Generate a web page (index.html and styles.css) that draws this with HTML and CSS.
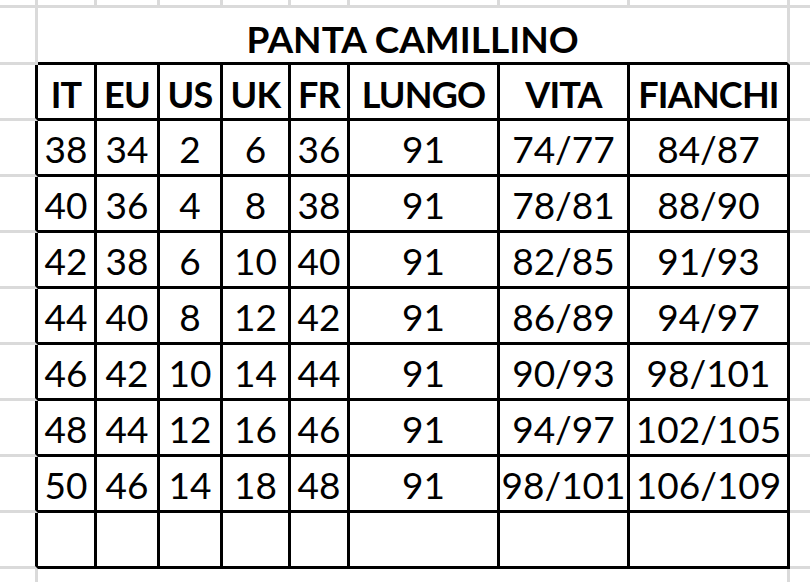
FILE: index.html
```html
<!DOCTYPE html>
<html lang="it">
<head>
<meta charset="utf-8">
<title>Panta Camillino</title>
<link rel="stylesheet" href="styles.css">
</head>
<body>
<div class="sheet">
  <!-- top spreadsheet row -->
  <div class="gc"></div><div class="gc"></div><div class="gc"></div><div class="gc"></div><div class="gc"></div>
  <div class="gc"></div><div class="gc"></div><div class="gc"></div><div class="gc"></div><div class="rm"></div>

  <!-- title -->
  <div class="gc"></div>
  <div class="title">PANTA CAMILLINO</div>
  <div class="rm"></div>

  <!-- header -->
  <div class="lm"></div>
  <div class="c h">IT</div><div class="c h">EU</div><div class="c h">US</div><div class="c h">UK</div><div class="c h">FR</div>
  <div class="c h">LUNGO</div><div class="c h">VITA</div><div class="c h">FIANCHI</div>
  <div class="rm"></div>

  <div class="lm"></div>
  <div class="c">38</div><div class="c">34</div><div class="c">2</div><div class="c">6</div><div class="c">36</div>
  <div class="c">91</div><div class="c">74/77</div><div class="c">84/87</div>
  <div class="rm"></div>

  <div class="lm"></div>
  <div class="c">40</div><div class="c">36</div><div class="c">4</div><div class="c">8</div><div class="c">38</div>
  <div class="c">91</div><div class="c">78/81</div><div class="c">88/90</div>
  <div class="rm"></div>

  <div class="lm"></div>
  <div class="c">42</div><div class="c">38</div><div class="c">6</div><div class="c">10</div><div class="c">40</div>
  <div class="c">91</div><div class="c">82/85</div><div class="c">91/93</div>
  <div class="rm"></div>

  <div class="lm"></div>
  <div class="c">44</div><div class="c">40</div><div class="c">8</div><div class="c">12</div><div class="c">42</div>
  <div class="c">91</div><div class="c">86/89</div><div class="c">94/97</div>
  <div class="rm"></div>

  <div class="lm"></div>
  <div class="c">46</div><div class="c">42</div><div class="c">10</div><div class="c">14</div><div class="c">44</div>
  <div class="c">91</div><div class="c">90/93</div><div class="c">98/101</div>
  <div class="rm"></div>

  <div class="lm"></div>
  <div class="c">48</div><div class="c">44</div><div class="c">12</div><div class="c">16</div><div class="c">46</div>
  <div class="c">91</div><div class="c">94/97</div><div class="c">102/105</div>
  <div class="rm"></div>

  <div class="lm"></div>
  <div class="c">50</div><div class="c">46</div><div class="c">14</div><div class="c">18</div><div class="c">48</div>
  <div class="c">91</div><div class="c">98/101</div><div class="c">106/109</div>
  <div class="rm"></div>

  <div class="lm"></div>
  <div class="c"></div><div class="c"></div><div class="c"></div><div class="c"></div><div class="c"></div>
  <div class="c"></div><div class="c"></div><div class="c"></div>
  <div class="rm"></div>

  <!-- below table -->
  <div class="bl"></div>
  <div class="below"></div>
  <div class="br"></div>
</div>
</body>
</html>
```
FILE: styles.css
```css
html, body {
  margin: 0;
  padding: 0;
  background: #ffffff;
  overflow: hidden;
}

.sheet {
  width: 810px;
  height: 582px;
  display: grid;
  grid-template-columns: 38px 59px 63px 63px 68px 59px 150px 130px 160px 20px;
  grid-template-rows: 8px 57px repeat(9, 56px) 13px;
  font-family: Lato, "Open Sans", sans-serif;
  color: #000;
}

.sheet > div {
  box-sizing: border-box;
}

/* plain grey grid cell */
.gc {
  border-right: 3px solid #dadada;
  border-bottom: 3px solid #dadada;
}

/* right margin */
.rm {
  border-bottom: 3px solid #dadada;
}

/* left margin next to the table */
.lm {
  border-right: 3px solid #000;
  border-bottom: 3px solid #dadada;
}

.title {
  grid-column: span 8;
  border-right: 3px solid #dadada;
  border-bottom: 3px solid #000;
  display: flex;
  align-items: flex-end;
  justify-content: center;
  padding-bottom: 5px;
  font-weight: 700;
  font-size: 37px;
  line-height: 1;
}

.c {
  border-right: 3px solid #000;
  border-bottom: 3px solid #000;
  display: flex;
  align-items: flex-end;
  justify-content: center;
  padding-bottom: 7px;
  font-size: 37px;
  line-height: 1;
  white-space: nowrap;
}

.c.h {
  font-weight: 700;
  font-size: 36px;
  letter-spacing: -0.8px;
  padding-bottom: 6px;
}

.bl {
  border-right: 3px solid #dadada;
}

.below {
  grid-column: span 8;
  border-right: 3px solid #dadada;
}
```
